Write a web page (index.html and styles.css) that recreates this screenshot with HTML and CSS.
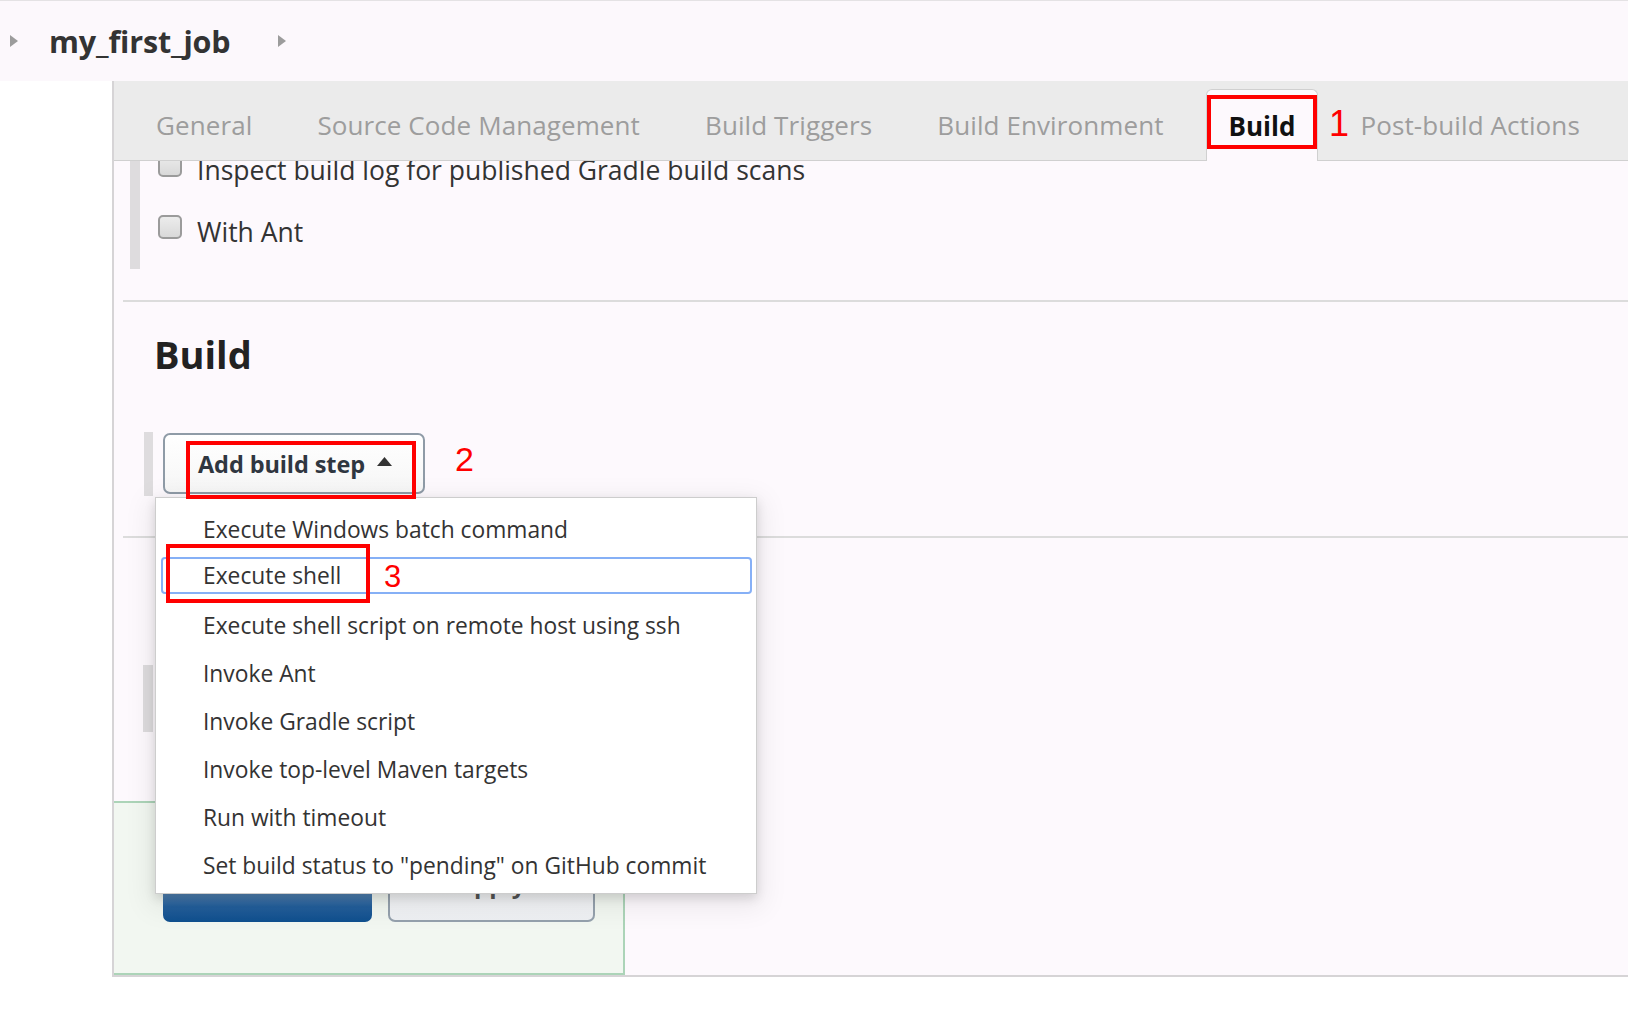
FILE: index.html
```html
<!DOCTYPE html>
<html lang="en">
<head>
<meta charset="utf-8">
<title>my_first_job Config</title>
<link rel="stylesheet" href="styles.css">
</head>
<body>
<header class="topbar">
  <span class="crumb-arrow"></span>
  <span class="job-name">my_first_job</span>
  <span class="crumb-arrow"></span>
</header>
<div class="layout">
  <aside class="side"></aside>
  <main class="panel">
    <nav class="tabs">
      <span class="tab">General</span>
      <span class="tab">Source Code Management</span>
      <span class="tab">Build Triggers</span>
      <span class="tab">Build Environment</span>
      <span class="tab tab-active">Build</span>
      <span class="tab">Post-build Actions</span>
    </nav>
    <div class="content">
      <section class="group">
        <div class="group-bar"></div>
        <div class="group-body">
          <label class="check-row"><input type="checkbox" class="cb"><span class="check-label">Inspect build log for published Gradle build scans</span></label>
          <label class="check-row"><input type="checkbox" class="cb"><span class="check-label">With Ant</span></label>
        </div>
      </section>
      <hr class="divider">
      <h2 class="section-title">Build</h2>
      <div class="step-row">
        <div class="step-bar"></div>
        <button class="add-step" type="button">Add build step<svg class="caret" width="15" height="9" viewBox="0 0 15 9"><path d="M7.5 0 L15 9 H0 Z" fill="#333"/></svg></button>
      </div>
      <hr class="divider divider-2">
      <div class="post-row"><div class="step-bar post-bar"></div></div>
      <div class="bottom-bar">
        <button class="btn-save" type="button">Save</button>
        <button class="btn-apply" type="button">Apply</button>
      </div>
    </div>
  </main>
</div>

<ul class="step-menu">
  <li class="menu-item">Execute Windows batch command</li>
  <li class="menu-item menu-item-active">Execute shell</li>
  <li class="menu-item">Execute shell script on remote host using ssh</li>
  <li class="menu-item">Invoke Ant</li>
  <li class="menu-item">Invoke Gradle script</li>
  <li class="menu-item">Invoke top-level Maven targets</li>
  <li class="menu-item">Run with timeout</li>
  <li class="menu-item">Set build status to "pending" on GitHub commit</li>
</ul>

<div class="mark mark-1"></div>
<div class="mark mark-2"></div>
<div class="mark mark-3"></div>
<span class="mark-num num-1">1</span>
<span class="mark-num num-2">2</span>
<span class="mark-num num-3">3</span>
</body>
</html>
```

FILE: styles.css
```css
* { box-sizing: border-box; }

html, body {
  margin: 0;
  padding: 0;
}

body {
  width: 1628px;
  height: 1020px;
  overflow: hidden;
  background: #ffffff;
  font-family: "Open Sans", "Noto Sans", "DejaVu Sans", sans-serif;
  color: #333333;
  position: relative;
}

/* ---------- top bar ---------- */
.topbar {
  height: 81px;
  border-top: 1px solid #e4e2e4;
  background: #fcf8fc;
  display: flex;
  align-items: center;
  padding-left: 10px;
}

.crumb-arrow {
  width: 0;
  height: 0;
  border-left: 8px solid #9c9c9c;
  border-top: 6px solid transparent;
  border-bottom: 6px solid transparent;
}

.job-name {
  margin: 0 48px 0 31px;
  font-size: 30.5px;
  font-weight: 700;
  color: #333333;
  line-height: normal;
  letter-spacing: -0.15px;
}

/* ---------- layout ---------- */
.layout {
  display: flex;
  align-items: flex-start;
}

.side {
  width: 112px;
  flex: none;
}

.panel {
  flex: 1;
  border-left: 2px solid #d6d4d6;
  border-bottom: 2px solid #d6d4d6;
  background: #fdf9fd;
}

/* ---------- tabs ---------- */
.tabs {
  height: 80px;
  background: #ebebeb;
  border-bottom: 1px solid #d0d0d0;
  display: flex;
  align-items: flex-end;
  padding-left: 19px;
  gap: 19px;
}

.tab {
  height: 71px;
  padding: 0 23px;
  display: flex;
  align-items: center;
  font-size: 26px;
  letter-spacing: 0.1px;
  color: #9d9d9d;
  white-space: nowrap;
}

.tab-active {
  height: 72px;
  margin-bottom: -1px;
  padding: 0 22px;
  background: #fdf9fd;
  border: 1px solid #d0d0d0;
  border-bottom: none;
  border-radius: 6px 6px 0 0;
  color: #111111;
  font-weight: 700;
  letter-spacing: 0;
}

/* ---------- content ---------- */
.content {
  overflow: hidden;
  height: 814px;
}

.group {
  display: flex;
  margin: -20px 0 0 16px;
}

.group-bar {
  width: 10px;
  background: #dedcde;
}

.group-body {
  padding: 11px 0 19px 18px;
  display: flex;
  flex-direction: column;
  gap: 26px;
}

.check-row {
  display: flex;
  align-items: flex-start;
  height: 36px;
}

.cb {
  appearance: none;
  -webkit-appearance: none;
  margin: 1px 0 0 0;
  width: 24px;
  height: 24px;
  border: 2px solid #9b9b9b;
  border-radius: 5px;
  background: linear-gradient(#ececec, #d9d9d9);
  flex: none;
}

.check-label {
  margin-left: 15px;
  font-size: 26.5px;
  line-height: 36px;
  color: #333333;
  white-space: nowrap;
}

.divider {
  border: none;
  height: 2px;
  background: #dcdcdc;
  margin: 31px 0 0 9px;
}

.divider-2 {
  margin-top: 40px;
}

.section-title {
  margin: 30px 0 0 40px;
  font-size: 38px;
  line-height: 44px;
  font-weight: 700;
  color: #222222;
}

.step-row {
  margin: 56px 0 0 30px;
  height: 64px;
  display: flex;
  align-items: flex-start;
}

.step-bar {
  width: 9px;
  height: 64px;
  background: #dedcde;
}

.add-step {
  margin: 1px 0 0 10px;
  width: 262px;
  height: 61px;
  border: 2px solid #8f9ba7;
  border-radius: 7px;
  background: linear-gradient(#ffffff, #f6f6f6);
  font-family: inherit;
  font-size: 23.5px;
  letter-spacing: -0.1px;
  font-weight: 700;
  color: #2f3640;
  display: flex;
  align-items: center;
  padding: 0 0 0 33px;
  white-space: nowrap;
}

.caret {
  margin-left: 12px;
  margin-top: -4px;
}

.post-row {
  margin: 127px 0 0 29px;
  height: 67px;
  display: flex;
}

.post-bar {
  width: 10px;
  height: 67px;
}

.bottom-bar {
  margin: 69px 0 0 -2px;
  width: 513px;
  height: 174px;
  border: 2px solid #acd4b8;
  background: #f2f7f1;
  padding: 41px 0 0 49px;
  display: flex;
  gap: 16px;
  align-items: flex-start;
}

.btn-save {
  width: 209px;
  height: 78px;
  border: none;
  border-radius: 7px;
  background: linear-gradient(180deg, #9ab8d4 0%, #6a93bb 55%, #245f9b 80%, #0f4f8e 100%);
  color: #ffffff;
  font-family: inherit;
  font-size: 24px;
  font-weight: 700;
}

.btn-apply {
  width: 207px;
  height: 78px;
  border: 2px solid #95a1ad;
  border-radius: 7px;
  background: linear-gradient(#ffffff, #eef0f3);
  color: #555555;
  font-family: inherit;
  font-size: 24px;
  font-weight: 700;
}

/* ---------- dropdown menu ---------- */
.step-menu {
  position: absolute;
  left: 155px;
  top: 497px;
  width: 602px;
  margin: 0;
  padding: 6px 0 5px;
  list-style: none;
  background: #ffffff;
  border: 1px solid #cdcdcd;
  box-shadow: 0 4px 10px rgba(0, 0, 0, 0.13), 0 8px 26px 6px rgba(0, 0, 0, 0.07);
}

.menu-item {
  height: 48px;
  display: flex;
  align-items: center;
  padding: 2px 0 0 47px;
  font-size: 22.8px;
  color: #333333;
  white-space: nowrap;
}

.menu-item-active {
  height: 37px;
  margin: 5px 4px 6px 5px;
  border: 2px solid #86b0f6;
  border-radius: 4px;
  padding: 0 0 0 40px;
}

/* ---------- annotations ---------- */
.mark {
  position: absolute;
  border: 4px solid #ff0000;
}

.mark-1 { left: 1207px; top: 95px; width: 110px; height: 54px; }
.mark-2 { left: 186px; top: 441px; width: 230px; height: 58px; }
.mark-3 { left: 166px; top: 544px; width: 204px; height: 59px; }

.mark-num {
  position: absolute;
  font-family: "Liberation Sans", Arial, sans-serif;
  color: #ff0000;
  line-height: 1;
}

.num-1 { left: 1329px; top: 106px; font-size: 36px; }
.num-2 { left: 455px; top: 442px; font-size: 34px; }
.num-3 { left: 384px; top: 561px; font-size: 31px; }
```
